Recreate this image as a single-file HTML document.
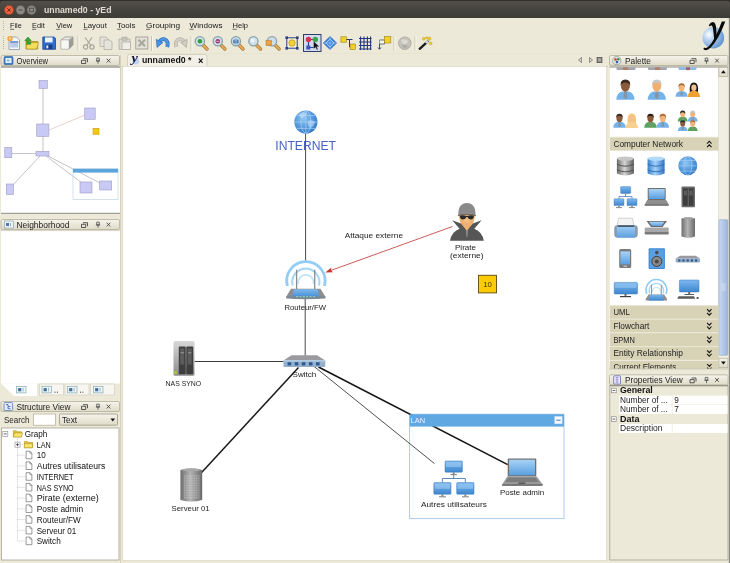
<!DOCTYPE html>
<html><head><meta charset="utf-8"><title>unnamed0 - yEd</title>
<style>
*{margin:0;padding:0}
html,body{width:730px;height:563px;overflow:hidden;background:#ece9d8}
svg{position:absolute;left:-6px;top:-6px;display:block;filter:blur(0.45px)}
text{font-family:"Liberation Sans",sans-serif}
</style></head><body>
<svg width="742" height="575" viewBox="-6 -6 742 575">
<rect x="-6" y="-6" width="742" height="575" fill="#ece9d8"/>

<defs>
<linearGradient id="gTitle" x1="0" y1="0" x2="0" y2="1"><stop offset="0" stop-color="#524f48"/><stop offset="0.5" stop-color="#47453f"/><stop offset="1" stop-color="#3e3c37"/></linearGradient>
<linearGradient id="gHead" x1="0" y1="0" x2="0" y2="1"><stop offset="0" stop-color="#f6f4ec"/><stop offset="1" stop-color="#dfdbc8"/></linearGradient>
<linearGradient id="gBlue" x1="0" y1="0" x2="0" y2="1"><stop offset="0" stop-color="#7db8ee"/><stop offset="1" stop-color="#3d86d0"/></linearGradient>
<linearGradient id="gBlueL" x1="0" y1="0" x2="0" y2="1"><stop offset="0" stop-color="#a8d2f6"/><stop offset="1" stop-color="#5a9fdf"/></linearGradient>
<linearGradient id="gGray" x1="0" y1="0" x2="0" y2="1"><stop offset="0" stop-color="#bdbdbd"/><stop offset="1" stop-color="#7a7a7a"/></linearGradient>
<linearGradient id="gGrayH" x1="0" y1="0" x2="1" y2="0"><stop offset="0" stop-color="#6e6e6e"/><stop offset="0.45" stop-color="#b4b4b4"/><stop offset="1" stop-color="#6a6a6a"/></linearGradient>
<linearGradient id="gNas" x1="0" y1="0" x2="0" y2="1"><stop offset="0" stop-color="#d8d8d8"/><stop offset="1" stop-color="#8c8c8c"/></linearGradient>
<linearGradient id="gThumb" x1="0" y1="0" x2="1" y2="0"><stop offset="0" stop-color="#c9d9f1"/><stop offset="1" stop-color="#9db6de"/></linearGradient>
<radialGradient id="gGlobe" cx="0.4" cy="0.35" r="0.7"><stop offset="0" stop-color="#8cc4f4"/><stop offset="1" stop-color="#2f78c8"/></radialGradient>
<radialGradient id="gLogo" cx="0.3" cy="0.35" r="0.75"><stop offset="0" stop-color="#ffffff"/><stop offset="0.35" stop-color="#b9d3ee"/><stop offset="1" stop-color="#5c93cf"/></radialGradient>
<radialGradient id="gSkin" cx="0.5" cy="0.4" r="0.6"><stop offset="0" stop-color="#f6c48a"/><stop offset="1" stop-color="#e0a060"/></radialGradient>
</defs>
<rect x="-6" y="-6" width="742" height="24" fill="#2e2d2a"/>
<path d="M-6 18 V0 H736 V18 Z" fill="url(#gTitle)"/><path d="M-6 0.400 H736" stroke="#2e2d2a" stroke-width="1"/><path d="M0 0 h4 q-4 0 -4 4 z M730 0 h-4 q4 0 4 4 z" fill="#2a2926"/>
<circle cx="9" cy="10" r="4.7" fill="#e8603c" stroke="#8a3a22" stroke-width="0.6"/>
<path d="M7.3 8.3 L10.7 11.7 M10.7 8.3 L7.3 11.7" stroke="#6e2a18" stroke-width="0.9"/>
<circle cx="20.5" cy="10" r="4.5" fill="#8c8a82" stroke="#5c5a54" stroke-width="0.6"/>
<path d="M18.5 10 H22.5" stroke="#4a4843" stroke-width="0.9"/>
<circle cx="31.5" cy="10" r="4.5" fill="#8c8a82" stroke="#5c5a54" stroke-width="0.6"/>
<rect x="29.6" y="8.2" width="3.8" height="3.6" fill="none" stroke="#4a4843" stroke-width="0.8"/>
<text x="44" y="13.3" font-size="8.8" fill="#dfdbd2" font-weight="bold" text-anchor="start" textLength="67.5" lengthAdjust="spacingAndGlyphs" >unnamed0 - yEd</text>
<rect x="0" y="18" width="730" height="36" fill="#ece9d8"/>
<path d="M3.5 21 V31 M3.5 36 V50" stroke="#b8b4a2" stroke-width="1" stroke-dasharray="1 1"/>
<text x="10" y="28" font-size="8" fill="#1a1a1a" font-weight="normal" text-anchor="start" textLength="11.7" lengthAdjust="spacingAndGlyphs" >File</text>
<path d="M10 29.3 h4.2" stroke="#1a1a1a" stroke-width="0.6"/>
<text x="32" y="28" font-size="8" fill="#1a1a1a" font-weight="normal" text-anchor="start" textLength="12.7" lengthAdjust="spacingAndGlyphs" >Edit</text>
<path d="M32 29.3 h4.2" stroke="#1a1a1a" stroke-width="0.6"/>
<text x="56.2" y="28" font-size="8" fill="#1a1a1a" font-weight="normal" text-anchor="start" textLength="16.1" lengthAdjust="spacingAndGlyphs" >View</text>
<path d="M56.2 29.3 h4.2" stroke="#1a1a1a" stroke-width="0.6"/>
<text x="83.4" y="28" font-size="8" fill="#1a1a1a" font-weight="normal" text-anchor="start" textLength="23.5" lengthAdjust="spacingAndGlyphs" >Layout</text>
<path d="M83.4 29.3 h4.2" stroke="#1a1a1a" stroke-width="0.6"/>
<text x="117" y="28" font-size="8" fill="#1a1a1a" font-weight="normal" text-anchor="start" textLength="18.5" lengthAdjust="spacingAndGlyphs" >Tools</text>
<path d="M117 29.3 h4.2" stroke="#1a1a1a" stroke-width="0.6"/>
<text x="146" y="28" font-size="8" fill="#1a1a1a" font-weight="normal" text-anchor="start" textLength="34" lengthAdjust="spacingAndGlyphs" >Grouping</text>
<path d="M146 29.3 h4.2" stroke="#1a1a1a" stroke-width="0.6"/>
<text x="189.5" y="28" font-size="8" fill="#1a1a1a" font-weight="normal" text-anchor="start" textLength="33" lengthAdjust="spacingAndGlyphs" >Windows</text>
<path d="M189.5 29.3 h4.2" stroke="#1a1a1a" stroke-width="0.6"/>
<text x="232.5" y="28" font-size="8" fill="#1a1a1a" font-weight="normal" text-anchor="start" textLength="15.5" lengthAdjust="spacingAndGlyphs" >Help</text>
<path d="M232.5 29.3 h4.2" stroke="#1a1a1a" stroke-width="0.6"/>
<path d="M0 53.5 H730" stroke="#e6e3d1" stroke-width="0.8"/>
<rect x="728.800" y="18" width="8" height="560" fill="#8d8a80"/>
<g transform="translate(7,36)"><path d="M2 1 h7.5 l3 3 v9.5 h-10.5 z" fill="#f4f6fa" stroke="#8a96ac" stroke-width="0.8"/><rect x="3.2" y="5" width="8" height="6.5" fill="#b9c9e6"/><rect x="3.2" y="5" width="8" height="2" fill="#7d9bd0"/><circle cx="3" cy="2.5" r="2.6" fill="#f2a23a"/><circle cx="3" cy="2.5" r="1.2" fill="#fbd58c"/></g>
<g transform="translate(24.5,36)"><path d="M1.5 4 h4 l1.2 1.5 h6.5 v7.5 h-11.7 z" fill="#d9b92a" stroke="#9c8414" stroke-width="0.7"/><path d="M3 6.5 h11 l-1.8 6.5 h-10.7 z" fill="#f3df5c" stroke="#a8901a" stroke-width="0.6"/><path d="M3.5 1 l-3.2 3.6 h2 v3.6 h4 v-2.2 h-1.8 v-1.4 h2.2 z" fill="#3aa63a" stroke="#1f7a1f" stroke-width="0.5"/></g>
<g transform="translate(42,36)"><path d="M0.8 1 h11.4 l1.3 1.3 v11 h-12.7 z" fill="#2f6fd0" stroke="#1b4792" stroke-width="0.8"/><rect x="3" y="1.4" width="7.6" height="5" fill="#eef2fa"/><rect x="3.4" y="8.6" width="7" height="4.6" fill="#1b3f86"/><rect x="4.3" y="9.4" width="2" height="3" fill="#dfe7f5"/></g>
<g transform="translate(60,36)"><path d="M1 4 l4 -3 h8 v8 l-4 4 h-8 z" fill="#e9e9e6" stroke="#8c8c88" stroke-width="0.7"/><path d="M1 4 h8 v9 M9 4 l4 -3" fill="none" stroke="#8c8c88" stroke-width="0.7"/><path d="M9 4.3 l4 -3 v7.7 l-4 4 z" fill="#9c9c98"/><path d="M1.4 4.4 h7.3 v8.3 h-7.3 z" fill="#f7f7f4"/></g>
<path d="M78 36 V51" stroke="#c9c5b2" stroke-width="1"/><path d="M79 36 V51" stroke="#f8f7f0" stroke-width="1"/>
<g transform="translate(82,36)" fill="none" stroke="#aaa79c" stroke-width="1.2"><path d="M3 1.5 L9 9.5 M10 1.5 L4.5 9.5"/><circle cx="3.6" cy="11" r="2.1"/><circle cx="10" cy="11" r="2.1"/></g>
<g transform="translate(99,36)" fill="#e6e4da" stroke="#b0ada2" stroke-width="0.8"><path d="M1 1 h6 l2 2 v7.5 h-8 z"/><path d="M5 4 h6 l2 2 v7.5 h-8 z"/></g>
<g transform="translate(118,36)" fill="#dcdad0" stroke="#b0ada2" stroke-width="0.8"><path d="M1 3 h11 v10.5 h-11 z"/><path d="M4 1.2 h5 v3 h-5 z" fill="#c9c7bc"/><path d="M4 6 h8.5 v7.5 h-8.5 z" fill="#efede6"/></g>
<g transform="translate(135,36)"><rect x="0.8" y="1" width="12" height="12" fill="#e4e2d8" stroke="#9f9c92" stroke-width="0.9"/><path d="M3.5 3.8 L10 10.3 M10 3.8 L3.5 10.3" stroke="#aaa79c" stroke-width="2.2"/></g>
<path d="M151.5 36 V51" stroke="#c9c5b2" stroke-width="1"/><path d="M152.5 36 V51" stroke="#f8f7f0" stroke-width="1"/>
<g transform="translate(155.5,36)"><path d="M11.800 11 C13.800 3.600 7 0.600 4.200 5.400" fill="none" stroke="#2a66b8" stroke-width="3.800"/><path d="M11.800 11 C13.800 3.600 7 0.600 4.200 5.400" fill="none" stroke="#4a96e4" stroke-width="2.500"/><path d="M0.800 3.400 L7.400 6.600 L1.600 11.400 Z" fill="#4a96e4" stroke="#2a66b8" stroke-width="0.700"/></g>
<g transform="translate(188,36) scale(-1,1)"><path d="M11.800 11 C13.800 3.600 7 0.600 4.200 5.400" fill="none" stroke="#b4b1a6" stroke-width="3.800"/><path d="M11.800 11 C13.800 3.600 7 0.600 4.200 5.400" fill="none" stroke="#d0cec4" stroke-width="2.500"/><path d="M0.800 3.400 L7.400 6.600 L1.600 11.400 Z" fill="#d0cec4" stroke="#a9a69c" stroke-width="0.700"/></g>
<path d="M191 36 V51" stroke="#c9c5b2" stroke-width="1"/><path d="M192 36 V51" stroke="#f8f7f0" stroke-width="1"/>
<g transform="translate(194.4,36)"><path d="M8.400 8.800 L12.600 13" stroke="#a87830" stroke-width="3.400" stroke-linecap="round"/><path d="M8.400 8.800 L12.600 13" stroke="#e0a858" stroke-width="2.200" stroke-linecap="round"/><circle cx="5.500" cy="5.300" r="4.600" fill="#cfe0ea" stroke="#86a2a8" stroke-width="1.300"/><circle cx="5.5" cy="5.3" r="2.300" fill="#2f9e3f"/></g>
<g transform="translate(212.3,36)"><path d="M8.400 8.800 L12.600 13" stroke="#a87830" stroke-width="3.400" stroke-linecap="round"/><path d="M8.400 8.800 L12.600 13" stroke="#e0a858" stroke-width="2.200" stroke-linecap="round"/><circle cx="5.500" cy="5.300" r="4.600" fill="#cfe0ea" stroke="#86a2a8" stroke-width="1.300"/><circle cx="5.5" cy="5.3" r="2.300" fill="#9a3a6a"/><path d="M4 5.3 h3" stroke="#f0d0e0" stroke-width="0.800"/></g>
<g transform="translate(230.4,36)"><path d="M8.400 8.800 L12.600 13" stroke="#a87830" stroke-width="3.400" stroke-linecap="round"/><path d="M8.400 8.800 L12.600 13" stroke="#e0a858" stroke-width="2.200" stroke-linecap="round"/><circle cx="5.500" cy="5.300" r="4.600" fill="#cfe0ea" stroke="#86a2a8" stroke-width="1.300"/><circle cx="5.5" cy="5.5" r="3" fill="#8fb4da"/><path d="M3.6 4.2 v2.8 M7.4 4.2 v2.8 M5.5 4.8 v0.6 M5.5 6.2 v0.6" stroke="#23466e" stroke-width="0.8"/></g>
<g transform="translate(247.9,36)"><path d="M8.400 8.800 L12.600 13" stroke="#a87830" stroke-width="3.400" stroke-linecap="round"/><path d="M8.400 8.800 L12.600 13" stroke="#e0a858" stroke-width="2.200" stroke-linecap="round"/><circle cx="5.500" cy="5.300" r="4.600" fill="#cfe0ea" stroke="#86a2a8" stroke-width="1.300"/><circle cx="4.8" cy="4.6" r="2" fill="#eef6fc"/></g>
<g transform="translate(266.5,36)"><path d="M8.400 8.800 L12.600 13" stroke="#a87830" stroke-width="3.400" stroke-linecap="round"/><path d="M8.400 8.800 L12.600 13" stroke="#e0a858" stroke-width="2.200" stroke-linecap="round"/><circle cx="5.500" cy="5.300" r="4.600" fill="#cfe0ea" stroke="#86a2a8" stroke-width="1.300"/><rect x="-0.5" y="4.6" width="5.4" height="5" fill="#f0a040" stroke="#b8702a" stroke-width="0.5"/></g>
<g transform="translate(285,36)"><rect x="1.8" y="1.8" width="10.4" height="10.4" fill="#f4f1d2" stroke="#2c3e86" stroke-width="1"/><circle cx="7" cy="7" r="3.2" fill="#f3d23a" stroke="#a88a14" stroke-width="0.6"/><g fill="#2c3e86"><rect x="0.4" y="0.4" width="2.6" height="2.6"/><rect x="11" y="0.4" width="2.6" height="2.6"/><rect x="0.4" y="11" width="2.6" height="2.6"/><rect x="11" y="11" width="2.6" height="2.6"/></g></g>
<rect x="303.5" y="34.5" width="17.5" height="17" fill="#d3dcef" stroke="#2f3f6e" stroke-width="1"/>
<g transform="translate(305.5,36.5)"><path d="M3 3 H10 M3 3 V11 H10" fill="none" stroke="#2a3fa0" stroke-width="1.2"/><circle cx="3" cy="3" r="2.7" fill="#e0305a"/><circle cx="9.8" cy="3" r="2.7" fill="#3aa64a"/><rect x="0.8" y="9" width="4" height="4" fill="#3a56c0"/><path d="M8 4.5 v8 l2 -1.8 l1.3 2.8 l1.3 -0.6 l-1.3 -2.7 h2.6 z" fill="#111" stroke="#fff" stroke-width="0.3"/></g>
<g transform="translate(323,36)"><path d="M7 0.6 L13.6 7 L7 13.4 L0.4 7 Z" fill="#3f86dc" stroke="#1f5aa6" stroke-width="0.7"/><path d="M7 3 L11 7 L7 11 L3 7 Z" fill="none" stroke="#a9d0f6" stroke-width="0.9"/><path d="M7 0.6 V13.4 M0.4 7 H13.6" stroke="#a9d0f6" stroke-width="0.6"/></g>
<g transform="translate(340.5,36)"><path d="M5 3.5 H9 V11 H11" fill="none" stroke="#23366e" stroke-width="1"/><path d="M9 3.5 h3" stroke="#23366e" stroke-width="1"/><rect x="0.4" y="0.8" width="5.4" height="5.4" fill="#f0d02a" stroke="#9c8210" stroke-width="0.6"/><rect x="9.6" y="8" width="5.2" height="5.6" fill="#f0d02a" stroke="#9c8210" stroke-width="0.6"/></g>
<g transform="translate(359,36.5)" stroke="#23367e" stroke-width="1.1"><path d="M0 2 H12.5 M0 5.5 H12.5 M0 9 H12.5 M0 12.5 H12.5 M1.6 0 V13.5 M5 0 V13.5 M8.4 0 V13.5 M11.6 0 V13.5"/></g>
<g transform="translate(377,36)"><path d="M2.5 4 V13 M1 11.5 l1.5 1.8 l1.5 -1.8" fill="none" stroke="#2a3a6e" stroke-width="0.9"/><path d="M2.5 4 h5 v4 h-5" fill="#f4f4f0" stroke="#2a3a6e" stroke-width="0.7"/><rect x="7.4" y="0.6" width="6.4" height="6.4" fill="#f0d02a" stroke="#9c8210" stroke-width="0.6"/></g>
<path d="M394 36 V51" stroke="#c9c5b2" stroke-width="1"/><path d="M395 36 V51" stroke="#f8f7f0" stroke-width="1"/>
<g transform="translate(398,36)"><circle cx="6.8" cy="7.2" r="6.3" fill="#c4c2b8" stroke="#a3a096" stroke-width="0.7"/><path d="M3 4 q4 -2 7 1 q-1 4 -5 3 z" fill="#dcdad2"/><path d="M4 9 q3 -1 6 1 q-2 3 -5 2 z" fill="#b0aea4"/></g>
<path d="M415 36 V51" stroke="#c9c5b2" stroke-width="1"/><path d="M416 36 V51" stroke="#f8f7f0" stroke-width="1"/>
<g transform="translate(418.5,36)"><path d="M1.2 12.8 L9 5.6" stroke="#1c1c1c" stroke-width="2.3" stroke-linecap="round"/><path d="M7.4 7 L9.3 5.3" stroke="#e8e8e8" stroke-width="2.3"/><g fill="#f0d02a" stroke="#a88a14" stroke-width="0.4"><circle cx="10.8" cy="2.6" r="1.7"/><circle cx="5.2" cy="2.8" r="1.4"/><circle cx="12.2" cy="7.4" r="1.4"/><circle cx="8" cy="1.8" r="1"/></g></g>
<circle cx="713.3" cy="37.7" r="10.8" fill="url(#gLogo)"/>
<path d="M704.4 47.4 q1.8 1.4 4.2 -0.8 q6.4 -6.500 13.200 -25.200 h3.500 q-6.700 18 -14.600 26.200 q-3.800 3.600 -6.500 2.200 q-1.700 -1 0.200 -2.400 z" fill="#0a0a0a"/>
<path d="M708.800 25.200 q2.600 -4.200 5.400 -2.800 q1.800 1.400 2 6.800 l0.700 9 l-2.500 2.800 l-1.300 -11.800 q-0.400 -3.800 -1.800 -3.800 q-0.900 0 -1.700 1 z" fill="#0a0a0a"/>
<rect x="1" y="55.5" width="118.5" height="10" rx="1.5" fill="url(#gHead)" stroke="#b3af9c" stroke-width="0.8"/>
<text x="16.5" y="63.5" font-size="8.2" fill="#222" font-weight="normal" text-anchor="start" textLength="31.6" lengthAdjust="spacingAndGlyphs" >Overview</text>
<path d="M83.0 58.7 h4.5 v3.5 M81.5 60.3 h4.2 v3.2 h-4.2 z" fill="none" stroke="#333" stroke-width="0.8"/>
<path d="M96.7 58.1 h2.600 v2.800 h-2.600 z M95.9 61.0 h4.200 M98.0 61.0 v2.800" fill="none" stroke="#3c3c3c" stroke-width="0.700"/>
<path d="M106.7 58.7 l3.6 3.8 M110.3 58.7 l-3.6 3.8" stroke="#333" stroke-width="0.8"/>
<g transform="translate(4,56.5)"><rect x="0" y="0" width="9" height="8" rx="1" fill="#3f7fd0" stroke="#2a5a9c" stroke-width="0.6"/><rect x="1.5" y="1.5" width="6" height="5" fill="#e8f0fa"/><rect x="3" y="3" width="2.5" height="2" fill="#8fb0dc"/></g>
<rect x="1" y="66.5" width="119" height="147" fill="#fff"/>
<path d="M1 67 H120" stroke="#6e6c64" stroke-width="1.2"/><path d="M1 213.3 H120" stroke="#8e8c84" stroke-width="1"/>
<path d="M120.5 55 V563" stroke="#d4d0bc" stroke-width="1"/>
<g stroke="#b4b4bc" stroke-width="0.8" fill="none"><path d="M43 88 V124"/><path d="M49 130 L85 115" stroke="#e4c4c4"/><path d="M43 136 V151.5"/><path d="M12 153.5 H36"/><path d="M40 156 L12 186"/><path d="M46 156 L82 183"/><path d="M47 155.5 L100 183"/></g>
<rect x="39" y="80.4" width="8.3" height="8" fill="#c9c9f6" stroke="#9c9cc4" stroke-width="0.6"/>
<rect x="84.7" y="108" width="10.5" height="11.3" fill="#c9c9f6" stroke="#9c9cc4" stroke-width="0.6"/>
<rect x="36.7" y="124" width="12.2" height="12.3" fill="#c9c9f6" stroke="#9c9cc4" stroke-width="0.6"/>
<rect x="93" y="128.3" width="6" height="6" fill="#f3c61a" stroke="#c9a010" stroke-width="0.6"/>
<rect x="4.8" y="147.4" width="7" height="10.3" fill="#c9c9f6" stroke="#9c9cc4" stroke-width="0.6"/>
<rect x="36" y="151.3" width="13" height="4.7" fill="#c9c9f6" stroke="#9c9cc4" stroke-width="0.6"/>
<rect x="6.4" y="184" width="7" height="10.4" fill="#c9c9f6" stroke="#9c9cc4" stroke-width="0.6"/>
<rect x="73" y="168.8" width="45" height="30.7" fill="none" stroke="#c4d4e0" stroke-width="0.7"/>
<rect x="73" y="168.8" width="45" height="3.8" fill="#5ba4dc"/>
<rect x="80" y="182" width="12" height="11" fill="#c9c9f6" stroke="#9c9cc4" stroke-width="0.6"/>
<rect x="99.7" y="181" width="12" height="9" fill="#c9c9f6" stroke="#9c9cc4" stroke-width="0.6"/>
<rect x="1" y="219.5" width="118.5" height="10" rx="1.5" fill="url(#gHead)" stroke="#b3af9c" stroke-width="0.8"/>
<text x="16.5" y="227.5" font-size="8.2" fill="#222" font-weight="normal" text-anchor="start" textLength="53" lengthAdjust="spacingAndGlyphs" >Neighborhood</text>
<path d="M83.0 222.7 h4.5 v3.5 M81.5 224.3 h4.2 v3.2 h-4.2 z" fill="none" stroke="#333" stroke-width="0.8"/>
<path d="M96.7 222.1 h2.600 v2.800 h-2.600 z M95.9 225.0 h4.200 M98.0 225.0 v2.800" fill="none" stroke="#3c3c3c" stroke-width="0.700"/>
<path d="M106.7 222.7 l3.6 3.8 M110.3 222.7 l-3.6 3.8" stroke="#333" stroke-width="0.8"/>
<g transform="translate(4.5,221)"><rect x="0" y="0" width="9" height="7" fill="#eef4f8" stroke="#7a9ab0" stroke-width="0.6"/><rect x="1.5" y="2" width="3" height="3" fill="#4a7ab0"/><path d="M6 2 v3" stroke="#7a9ab0" stroke-width="0.8"/></g>
<rect x="1" y="230.5" width="119" height="153" fill="#fff"/>
<path d="M1 230.600 H120" stroke="#d0ccba" stroke-width="0.8"/>
<path d="M1 383.5 L14 396 H37 V383.5 Z" fill="#fff"/>
<rect x="39.5" y="384" width="24" height="11" fill="#f7f6f0" stroke="#d4d0c0" stroke-width="0.7"/>
<rect x="65" y="384" width="24" height="11" fill="#f7f6f0" stroke="#d4d0c0" stroke-width="0.7"/>
<rect x="90.5" y="384" width="24" height="11" fill="#f7f6f0" stroke="#d4d0c0" stroke-width="0.7"/>
<g transform="translate(16.5,386.3)"><rect x="0" y="0" width="9.5" height="6.6" fill="#eef6f6" stroke="#86aab4" stroke-width="0.7"/><rect x="1.6" y="1.8" width="3.2" height="3.2" fill="#3f6fa0"/><path d="M6.6 1.6 v3.6" stroke="#86aab4" stroke-width="0.8"/></g>
<g transform="translate(42,386.3)"><rect x="0" y="0" width="9.5" height="6.6" fill="#eef6f6" stroke="#86aab4" stroke-width="0.7"/><rect x="1.6" y="1.8" width="3.2" height="3.2" fill="#3f6fa0"/><path d="M6.6 1.6 v3.6" stroke="#86aab4" stroke-width="0.8"/></g>
<path d="M54.5 392.2 h1 m1.4 0 h1" stroke="#333" stroke-width="1"/>
<g transform="translate(67.5,386.3)"><rect x="0" y="0" width="9.5" height="6.6" fill="#eef6f6" stroke="#86aab4" stroke-width="0.7"/><rect x="1.6" y="1.8" width="3.2" height="3.2" fill="#3f6fa0"/><path d="M6.6 1.6 v3.6" stroke="#86aab4" stroke-width="0.8"/></g>
<path d="M80.0 392.2 h1 m1.4 0 h1" stroke="#333" stroke-width="1"/>
<g transform="translate(93.5,386.3)"><rect x="0" y="0" width="9.5" height="6.6" fill="#eef6f6" stroke="#86aab4" stroke-width="0.7"/><rect x="1.6" y="1.8" width="3.2" height="3.2" fill="#3f6fa0"/><path d="M6.6 1.6 v3.6" stroke="#86aab4" stroke-width="0.8"/></g>
<rect x="1" y="401.5" width="118.5" height="10" rx="1.5" fill="url(#gHead)" stroke="#b3af9c" stroke-width="0.8"/>
<text x="16.5" y="409.5" font-size="8.2" fill="#222" font-weight="normal" text-anchor="start" textLength="53.9" lengthAdjust="spacingAndGlyphs" >Structure View</text>
<path d="M83.0 404.7 h4.5 v3.5 M81.5 406.3 h4.2 v3.2 h-4.2 z" fill="none" stroke="#333" stroke-width="0.8"/>
<path d="M96.7 404.1 h2.600 v2.800 h-2.600 z M95.9 407.0 h4.200 M98.0 407.0 v2.800" fill="none" stroke="#3c3c3c" stroke-width="0.700"/>
<path d="M106.7 404.7 l3.6 3.8 M110.3 404.7 l-3.6 3.8" stroke="#333" stroke-width="0.8"/>
<g transform="translate(4,402.5)"><rect x="0" y="0" width="8.6" height="8" rx="1" fill="#e4ecf8" stroke="#4a6eb0" stroke-width="0.7"/><path d="M2 2 h2 v2 M4 4 h2.5 M4 4 v2.2 h2.5" fill="none" stroke="#3a5ea8" stroke-width="0.8"/></g>
<text x="4" y="422.7" font-size="8.2" fill="#222" font-weight="normal" text-anchor="start" textLength="25.4" lengthAdjust="spacingAndGlyphs" >Search</text>
<rect x="33.5" y="414" width="22" height="11.2" fill="#fff" stroke="#b8b4a2" stroke-width="0.8"/>
<rect x="59.5" y="414" width="58" height="11.2" rx="1" fill="url(#gHead)" stroke="#9c9888" stroke-width="0.8"/>
<text x="62" y="422.6" font-size="8.2" fill="#222" font-weight="normal" text-anchor="start" textLength="15" lengthAdjust="spacingAndGlyphs" >Text</text>
<path d="M110.5 418.6 h4.6 l-2.3 2.8 z" fill="#111"/>
<rect x="1.5" y="428" width="117.5" height="132" fill="#fff" stroke="#a8a494" stroke-width="0.8"/>
<g stroke="#a8a8a8" stroke-width="0.6" stroke-dasharray="1 1" fill="none">
<path d="M17.5 438.700 V541.1"/>
<path d="M17.5 444.44 H25"/>
<path d="M17.5 455.18 H25"/>
<path d="M17.5 465.91999999999996 H25"/>
<path d="M17.5 476.65999999999997 H25"/>
<path d="M17.5 487.4 H25"/>
<path d="M17.5 498.14 H25"/>
<path d="M17.5 508.88 H25"/>
<path d="M17.5 519.62 H25"/>
<path d="M17.5 530.36 H25"/>
<path d="M17.5 541.1 H25"/>
</g>
<rect x="2.8" y="431.4" width="5" height="5" fill="#fff" stroke="#888" stroke-width="0.6"/><path d="M3.9 433.9 h2.8" stroke="#222" stroke-width="0.7"/>
<g transform="translate(13,429.5)"><path d="M0.3 1.2 h3 l0.9 1 h4.3 v5.3 h-8.2 z" fill="#e4c23a" stroke="#a88a14" stroke-width="0.5"/><path d="M1.6 3.4 h8 l-1.2 4.1 h-8.1 z" fill="#f8e474" stroke="#a88a14" stroke-width="0.5"/></g>
<text x="24.7" y="436.9" font-size="8.3" fill="#111" font-weight="normal" text-anchor="start" textLength="22.6" lengthAdjust="spacingAndGlyphs" >Graph</text>
<rect x="15" y="442.14" width="5" height="5" fill="#fff" stroke="#888" stroke-width="0.6"/><path d="M16.1 444.64 h2.8 M17.5 443.24 v2.8" stroke="#222" stroke-width="0.7"/>
<g transform="translate(24.2,440.24)"><path d="M0.3 1.2 h3 l0.9 1 h4.3 v5.3 h-8.2 z" fill="#e4c23a" stroke="#a88a14" stroke-width="0.5"/><path d="M0.3 3.4 h8 l-0.2 4.1 h-8.1 z" fill="#f8e474" stroke="#a88a14" stroke-width="0.5"/></g>
<text x="36.7" y="447.64" font-size="8.3" fill="#111" font-weight="normal" text-anchor="start" textLength="14.1" lengthAdjust="spacingAndGlyphs" >LAN</text>
<g transform="translate(25.7,450.78)"><path d="M0.4 0.4 h3.8 l2 2 v5.6 h-5.8 z" fill="#fff" stroke="#555" stroke-width="0.6"/><path d="M4.2 0.4 v2 h2" fill="none" stroke="#555" stroke-width="0.5"/></g>
<text x="36.7" y="458.38" font-size="8.3" fill="#111" font-weight="normal" text-anchor="start" textLength="9" lengthAdjust="spacingAndGlyphs" >10</text>
<g transform="translate(25.7,461.52)"><path d="M0.4 0.4 h3.8 l2 2 v5.6 h-5.8 z" fill="#fff" stroke="#555" stroke-width="0.6"/><path d="M4.2 0.4 v2 h2" fill="none" stroke="#555" stroke-width="0.5"/></g>
<text x="36.7" y="469.12" font-size="8.3" fill="#111" font-weight="normal" text-anchor="start" textLength="68.6" lengthAdjust="spacingAndGlyphs" >Autres utilisateurs</text>
<g transform="translate(25.7,472.25999999999993)"><path d="M0.4 0.4 h3.8 l2 2 v5.6 h-5.8 z" fill="#fff" stroke="#555" stroke-width="0.6"/><path d="M4.2 0.4 v2 h2" fill="none" stroke="#555" stroke-width="0.5"/></g>
<text x="36.7" y="479.85999999999996" font-size="8.3" fill="#111" font-weight="normal" text-anchor="start" textLength="36.7" lengthAdjust="spacingAndGlyphs" >INTERNET</text>
<g transform="translate(25.7,482.99999999999994)"><path d="M0.4 0.4 h3.8 l2 2 v5.6 h-5.8 z" fill="#fff" stroke="#555" stroke-width="0.6"/><path d="M4.2 0.4 v2 h2" fill="none" stroke="#555" stroke-width="0.5"/></g>
<text x="36.7" y="490.59999999999997" font-size="8.3" fill="#111" font-weight="normal" text-anchor="start" textLength="37" lengthAdjust="spacingAndGlyphs" >NAS SYNO</text>
<g transform="translate(25.7,493.73999999999995)"><path d="M0.4 0.4 h3.8 l2 2 v5.6 h-5.8 z" fill="#fff" stroke="#555" stroke-width="0.6"/><path d="M4.2 0.4 v2 h2" fill="none" stroke="#555" stroke-width="0.5"/></g>
<text x="36.7" y="501.34" font-size="8.3" fill="#111" font-weight="normal" text-anchor="start" textLength="62" lengthAdjust="spacingAndGlyphs" >Pirate  (externe)</text>
<g transform="translate(25.7,504.4799999999999)"><path d="M0.4 0.4 h3.8 l2 2 v5.6 h-5.8 z" fill="#fff" stroke="#555" stroke-width="0.6"/><path d="M4.2 0.4 v2 h2" fill="none" stroke="#555" stroke-width="0.5"/></g>
<text x="36.7" y="512.0799999999999" font-size="8.3" fill="#111" font-weight="normal" text-anchor="start" textLength="46.6" lengthAdjust="spacingAndGlyphs" >Poste admin</text>
<g transform="translate(25.7,515.2199999999999)"><path d="M0.4 0.4 h3.8 l2 2 v5.6 h-5.8 z" fill="#fff" stroke="#555" stroke-width="0.6"/><path d="M4.2 0.4 v2 h2" fill="none" stroke="#555" stroke-width="0.5"/></g>
<text x="36.7" y="522.8199999999999" font-size="8.3" fill="#111" font-weight="normal" text-anchor="start" textLength="44" lengthAdjust="spacingAndGlyphs" >Routeur/FW</text>
<g transform="translate(25.7,525.9599999999999)"><path d="M0.4 0.4 h3.8 l2 2 v5.6 h-5.8 z" fill="#fff" stroke="#555" stroke-width="0.6"/><path d="M4.2 0.4 v2 h2" fill="none" stroke="#555" stroke-width="0.5"/></g>
<text x="36.7" y="533.56" font-size="8.3" fill="#111" font-weight="normal" text-anchor="start" textLength="39.5" lengthAdjust="spacingAndGlyphs" >Serveur 01</text>
<g transform="translate(25.7,536.6999999999999)"><path d="M0.4 0.4 h3.8 l2 2 v5.6 h-5.8 z" fill="#fff" stroke="#555" stroke-width="0.6"/><path d="M4.2 0.4 v2 h2" fill="none" stroke="#555" stroke-width="0.5"/></g>
<text x="36.7" y="544.3" font-size="8.3" fill="#111" font-weight="normal" text-anchor="start" textLength="24" lengthAdjust="spacingAndGlyphs" >Switch</text>
<path d="M127.5 66.5 V56.5 Q127.5 54.5 129.5 54.5 H205 Q207 54.5 207 56.5 V66.5" fill="#f2f0e6" stroke="#cfcbb8" stroke-width="0.8"/>
<path d="M121 66.5 H608" stroke="#d0ccb8" stroke-width="1"/>
<circle cx="135.800" cy="61.200" r="3.200" fill="#bdd3ee"/>
<text x="131.600" y="62" font-size="12.500" textLength="6.400" lengthAdjust="spacingAndGlyphs" font-style="italic" font-weight="bold" fill="#10103a" style="font-family:&quot;Liberation Serif&quot;,serif">y</text>
<text x="141.9" y="63.2" font-size="8.8" fill="#111" font-weight="bold" text-anchor="start" textLength="49.6" lengthAdjust="spacingAndGlyphs" >unnamed0 *</text>
<path d="M198.8 58.6 l3.8 4.2 M202.6 58.6 l-3.8 4.2" stroke="#111" stroke-width="1.1"/>
<path d="M581.5 57.5 v5 l-3 -2.5 z M589.5 57.5 v5 l3 -2.5 z" fill="#ddd9c8" stroke="#555" stroke-width="0.6"/>
<rect x="597" y="57.3" width="5" height="5.4" fill="#8a887e" stroke="#444" stroke-width="0.6"/><path d="M598.2 59 h2.6 M598.2 60.4 h2.6" stroke="#eee" stroke-width="0.5"/>
<rect x="123" y="66.6" width="483.200" height="493.600" fill="#fff"/>
<path d="M122.600 66.600 V560.500 H606.600 V66.600" fill="none" stroke="#dedac8" stroke-width="0.8"/>
<rect x="409.6" y="414.200" width="154.400" height="104.400" fill="#fff" stroke="#a4c8ea" stroke-width="0.9"/>
<g fill="none" stroke-linecap="butt">
<path d="M305.6 132 V262" stroke="#4a4a4a" stroke-width="1"/>
<path d="M305.2 298 V356" stroke="#4a4a4a" stroke-width="1"/>
<path d="M194.5 361.5 H284" stroke="#3c3c3c" stroke-width="1"/>
<path d="M298.5 367.5 L201.4 472.7" stroke="#1a1a1a" stroke-width="1.5"/>
<path d="M318.5 367 L507.7 464.6" stroke="#141414" stroke-width="1.550"/>
<path d="M314 366.4 L434.5 463.6" stroke="#3c3c3c" stroke-width="0.9"/>
<path d="M452.5 226.5 L331 270.4" stroke="#c84848" stroke-width="0.9"/>
</g>
<path d="M325.3 272.4 L331.4 267.6 L330.9 270.3 L332.9 272.3 Z" fill="#c83030"/>
<rect x="409.6" y="414.200" width="154.400" height="12.400" fill="#5fa8e2"/>
<text x="410.6" y="423" font-size="7.6" fill="#eef6fd" font-weight="normal" text-anchor="start" textLength="14.5" lengthAdjust="spacingAndGlyphs" >LAN</text>
<rect x="554.8" y="416.5" width="7.300" height="7.300" fill="#f4f8fc" stroke="#d4e4f4" stroke-width="0.5"/><path d="M556.3 420.2 h4.3" stroke="#4a7ab0" stroke-width="1"/>
<circle cx="305.9" cy="122" r="11.6" fill="url(#gGlobe)"/>
<g fill="none" stroke="#a9d4f8" stroke-width="0.8" opacity="0.85"><ellipse cx="305.9" cy="122" rx="5" ry="11.2"/><path d="M294.6 122 H317.2 M296.4 115.6 H315.4 M296.4 128.4 H315.4"/><path d="M305.9 110.6 V133.4"/></g>
<path d="M299 114 q4 -3 8 -1 q-1 4 -5 5 q-3 -1 -3 -4 z M308 121 q4 -2 7 1 q-1 5 -5 6 q-3 -3 -2 -7 z" fill="#cfe6fb" opacity="0.55"/>
<text x="275.3" y="149.5" font-size="12" fill="#4660c4" font-weight="normal" text-anchor="start" textLength="60.7" lengthAdjust="spacingAndGlyphs" >INTERNET</text>
<g fill="none" stroke-linecap="butt">
<path d="M287.4 286 A19.2 19.2 0 1 1 324.4 286" stroke="#93cdf5" stroke-width="2.8"/>
<path d="M292.6 285.5 A13.6 13.6 0 1 1 319 285.5" stroke="#a9d8f7" stroke-width="2.2"/>
<path d="M298.2 284 A7.8 7.8 0 1 1 313.6 284" stroke="#c2e3fa" stroke-width="1.8"/>
</g>
<path d="M296.6 269.8 V290 M314.7 269.8 V290" stroke="#8c8c8c" stroke-width="1.3"/>
<path d="M286.3 296.5 L291 288.8 H320.5 L325.3 296.5 V298.5 H286.3 Z" fill="#8e8e8e"/>
<path d="M294 289.2 H317.5 L320 298.5 H291.5 Z" fill="url(#gBlue)"/>
<path d="M286.3 296.2 H325.3 V298 Q306 300.6 286.3 298 Z" fill="#7c8a98"/>
<path d="M296 296.6 h19" stroke="#7fe0b0" stroke-width="0.9" stroke-dasharray="2 1.4"/>
<text x="284.4" y="309.6" font-size="8" fill="#1c1c1c" font-weight="normal" text-anchor="start" textLength="41.6" lengthAdjust="spacingAndGlyphs" >Routeur/FW</text>
<text x="344.7" y="238" font-size="8" fill="#1c1c1c" font-weight="normal" text-anchor="start" textLength="58.3" lengthAdjust="spacingAndGlyphs" >Attaque externe</text>
<path d="M450 240.8 q1.5 -9 9.5 -12 l-7.3 -8.5 l9.6 3.4 l5.1 6 l5.1 -6 l9.6 -3.4 l-7.3 8.500 q8 3 9.5 12 z" fill="#565656"/>
<path d="M459 213.5 q0 8 3 11.5 q2.5 3.400 4.900 3.800 q2.400 -0.400 4.900 -3.800 q3 -3.500 3 -11.500 z" fill="url(#gSkin)"/>
<path d="M461.600 222.5 l5.300 9 l5.300 -9 l-2 -0.5 l-3.300 4 l-3.300 -4 z" fill="#f0b070"/>
<path d="M465.800 231 l1.100 -1.500 l1.100 1.500 l-0.600 6 h-1 z" fill="#8a8a8a"/>
<path d="M458.300 214.600 q0 -11.600 8.600 -11.600 q8.600 0 8.600 11.600 q-8.600 -2.200 -17.200 0 z" fill="#8a8a8a"/>
<path d="M458 214.800 q8.900 -2.600 17.800 0 l0.200 1.400 q-9 -2.400 -18.200 0 z" fill="#6a6a6a"/>
<path d="M459.800 215.800 q3.400 -1 6.300 0.200 q0.800 -0.300 1.600 0 q2.900 -1.200 6.300 -0.200 q-0.200 3.600 -3.200 3.700 q-2.600 0 -3.400 -2.400 h-1 q-0.800 2.400 -3.400 2.400 q-3 -0.100 -3.200 -3.700 z" fill="#2a2a2a"/>
<text x="455" y="250" font-size="8" fill="#1c1c1c" font-weight="normal" text-anchor="start" textLength="21" lengthAdjust="spacingAndGlyphs" >Pirate</text>
<text x="450" y="258.4" font-size="8" fill="#1c1c1c" font-weight="normal" text-anchor="start" textLength="33.5" lengthAdjust="spacingAndGlyphs" >(externe)</text>
<rect x="478.5" y="275.3" width="18" height="17.6" fill="#fccb06" stroke="#5a4a10" stroke-width="0.9"/>
<text x="487.5" y="287" font-size="7.6" fill="#3a3000" font-weight="normal" text-anchor="middle" textLength="8.6" lengthAdjust="spacingAndGlyphs" >10</text>
<rect x="173.5" y="341" width="21" height="34.8" rx="1.5" fill="url(#gNas)"/>
<rect x="178.8" y="346.6" width="6.9" height="27.6" rx="0.8" fill="#3e3e3e"/><rect x="186.300" y="346.600" width="6.900" height="27.600" rx="0.8" fill="#3e3e3e"/>
<rect x="180.2" y="348.5" width="4" height="16" fill="#5c5c5c"/><rect x="187.7" y="348.5" width="4" height="16" fill="#5c5c5c"/>
<rect x="180.6" y="352" width="3.2" height="1.4" fill="#8a8a8a"/><rect x="188.1" y="352" width="3.2" height="1.4" fill="#8a8a8a"/>
<rect x="174.2" y="371.2" width="2.6" height="2.8" fill="#a4d020"/>
<text x="165.6" y="385.6" font-size="7.8" fill="#1c1c1c" font-weight="normal" text-anchor="start" textLength="35.6" lengthAdjust="spacingAndGlyphs" >NAS SYNO</text>
<path d="M283.4 360.5 L291.5 355.2 H317 L325.3 360.5 Z" fill="#9a9aa0"/>
<rect x="283.4" y="360.2" width="41.9" height="6.8" rx="1" fill="#94b0cc"/>
<rect x="283.4" y="360.2" width="41.9" height="1.4" fill="#b9d0e6"/>
<rect x="287.6" y="362.2" width="3.6" height="3.2" fill="#2c5a8e"/>
<rect x="294.70000000000005" y="362.2" width="3.6" height="3.2" fill="#2c5a8e"/>
<rect x="301.8" y="362.2" width="3.6" height="3.2" fill="#2c5a8e"/>
<rect x="308.90000000000003" y="362.2" width="3.6" height="3.2" fill="#2c5a8e"/>
<rect x="316.0" y="362.2" width="3.6" height="3.2" fill="#2c5a8e"/>
<text x="292.5" y="377" font-size="8" fill="#1c1c1c" font-weight="normal" text-anchor="start" textLength="23.8" lengthAdjust="spacingAndGlyphs" >Switch</text>
<path d="M180.4 470 q11 -3.400 21.800 0 V500 q-10.900 3.200 -21.800 0 Z" fill="url(#gGrayH)"/>
<path d="M180.4 470 q11 -3.400 21.800 0 q-10.900 2.600 -21.800 0 Z" fill="#a8a8a8"/>
<g stroke="#d0d0d0" stroke-width="0.5" opacity="0.55"><path d="M184 476.0 H199"/><path d="M184 478.4 H199"/><path d="M184 480.8 H199"/><path d="M184 483.2 H199"/><path d="M184 485.6 H199"/><path d="M184 488.0 H199"/><path d="M184 490.4 H199"/><path d="M184 492.8 H199"/><path d="M184 495.2 H199"/><path d="M184 497.6 H199"/><path d="M184.6 475 V499"/><path d="M187.0 475 V499"/><path d="M189.4 475 V499"/><path d="M191.79999999999998 475 V499"/><path d="M194.2 475 V499"/><path d="M196.6 475 V499"/><path d="M199.0 475 V499"/></g>
<text x="171.6" y="511.4" font-size="8" fill="#1c1c1c" font-weight="normal" text-anchor="start" textLength="38" lengthAdjust="spacingAndGlyphs" >Serveur 01</text>
<path d="M453.7 474 V478.500 M442.400 482.600 V478.500 H465.300 V482.600" fill="none" stroke="#4a7ab4" stroke-width="0.9"/>
<rect x="445" y="461" width="17.4" height="11.2" rx="0.8" fill="url(#gBlue)" stroke="#3a78bc" stroke-width="0.5"/>
<rect x="446" y="462" width="15.399999999999999" height="5.04" fill="#9ccbf4" opacity="0.6"/>
<path d="M450.500 474.600 h6.400" stroke="#7a7a7a" stroke-width="1"/><path d="M452.700 472.200 h2 v2 h-2 z" fill="#8a8a8a"/>
<rect x="433.8" y="482.6" width="17.2" height="11.6" rx="0.8" fill="url(#gBlue)" stroke="#3a78bc" stroke-width="0.5"/>
<rect x="434.8" y="483.6" width="15.2" height="5.22" fill="#9ccbf4" opacity="0.6"/>
<path d="M441.40000000000003 494.20000000000005 v2 h2 v-2 z" fill="#8a8a8a"/><path d="M439.00000000000006 496.80000000000007 h6.800" stroke="#7a7a7a" stroke-width="1"/>
<rect x="456.7" y="482.6" width="17.3" height="11.6" rx="0.8" fill="url(#gBlue)" stroke="#3a78bc" stroke-width="0.5"/>
<rect x="457.7" y="483.6" width="15.3" height="5.22" fill="#9ccbf4" opacity="0.6"/>
<path d="M464.34999999999997 494.20000000000005 v2 h2 v-2 z" fill="#8a8a8a"/><path d="M461.95 496.80000000000007 h6.800" stroke="#7a7a7a" stroke-width="1"/>
<text x="421" y="506.5" font-size="8" fill="#1c1c1c" font-weight="normal" text-anchor="start" textLength="65.8" lengthAdjust="spacingAndGlyphs" >Autres utilisateurs</text>
<rect x="507.700" y="458.400" width="28.600" height="18" rx="1" fill="#6e6e6e"/>
<rect x="509" y="459.700" width="26" height="15.600" fill="url(#gBlueL)"/>
<path d="M507.200 476.400 H536.800 L542.500 484.200 V485.800 H502.300 V484.200 Z" fill="#9a9a9a"/>
<path d="M502.300 484.200 H542.500 V485.800 H502.300 Z" fill="#6a6a6a"/>
<path d="M508.500 477.600 H535.500 L538.500 482 H505.500 Z" fill="#7c7c7c"/>
<rect x="518.500" y="482.400" width="7" height="1.600" fill="#5a5a5a"/>
<text x="499.9" y="495.4" font-size="8" fill="#1c1c1c" font-weight="normal" text-anchor="start" textLength="44.3" lengthAdjust="spacingAndGlyphs" >Poste admin</text>
<rect x="609.5" y="55.5" width="118.5" height="10" rx="1.5" fill="url(#gHead)" stroke="#b3af9c" stroke-width="0.8"/>
<text x="625.0" y="63.5" font-size="8.2" fill="#222" font-weight="normal" text-anchor="start" textLength="26" lengthAdjust="spacingAndGlyphs" >Palette</text>
<path d="M691.5 58.7 h4.5 v3.5 M690.0 60.3 h4.2 v3.2 h-4.2 z" fill="none" stroke="#333" stroke-width="0.8"/>
<path d="M705.2 58.1 h2.600 v2.800 h-2.600 z M704.4 61.0 h4.200 M706.5 61.0 v2.800" fill="none" stroke="#3c3c3c" stroke-width="0.700"/>
<path d="M715.2 58.7 l3.6 3.8 M718.8 58.7 l-3.6 3.8" stroke="#333" stroke-width="0.8"/>
<g transform="translate(612.5,56.300)"><circle cx="4.300" cy="4.300" r="4.100" fill="#dfe8e0" stroke="#7a8a80" stroke-width="0.6"/><circle cx="3" cy="3.200" r="1.300" fill="#d04030"/><circle cx="5.800" cy="3" r="1.200" fill="#3a8a3a"/><circle cx="4.500" cy="5.800" r="1.300" fill="#3a5ab0"/></g>
<rect x="609.5" y="66.5" width="119" height="302" fill="#f4f2e8"/>
<rect x="610" y="67" width="108.5" height="301.500" fill="#fff"/>
<path d="M609.5 67 H728.5" stroke="#8e8c84" stroke-width="1"/>
<path d="M609.5 368.800 H728.5" stroke="#b8b4a2" stroke-width="1"/>
<rect x="718.700" y="67.500" width="9.500" height="301" fill="#f1efe3" stroke="#d4d0bc" stroke-width="0.5"/>
<rect x="718.900" y="67.500" width="9" height="9" fill="url(#gHead)" stroke="#a8a494" stroke-width="0.6"/><path d="M721 73.300 h4.800 l-2.400 -3 z" fill="#111"/>
<rect x="718.900" y="219.800" width="9" height="135.400" rx="1" fill="url(#gThumb)" stroke="#8ea6d0" stroke-width="0.6"/>
<path d="M721 284 h4.800 M721 286 h4.800 M721 288 h4.800 M721 290 h4.800" stroke="#e8f0fa" stroke-width="0.6"/>
<rect x="718.900" y="358.200" width="9" height="9.500" fill="url(#gHead)" stroke="#a8a494" stroke-width="0.6"/><path d="M721 361.600 h4.800 l-2.400 3 z" fill="#111"/>
<path d="M616.500 67.300 h19 v1.400 q0 1.400 -1.400 1.400 h-16.200 q-1.400 0 -1.400 -1.400 z" fill="#a4a4ac"/><path d="M648 67.300 h19 v1.400 q0 1.400 -1.400 1.400 h-16.200 q-1.400 0 -1.400 -1.400 z" fill="#a4a4ac"/><path d="M678.500 67.300 h18 v1.400 q0 1.400 -1.400 1.400 h-15.200 q-1.400 0 -1.400 -1.400 z" fill="#8eb8e2"/>
<path d="M623 67.300 h5 v2.800 h-5 z M655 67.300 h5 v2.800 h-5 z" fill="#b08070"/><path d="M686 67.300 h4 v2.800 h-4 z" fill="#a06070"/>
<g transform="translate(625.4,79.6) scale(0.96)"><path d="M-9.500 21 q0.500 -7 6 -8.500 h7 q5.500 1.500 6 8.500 z" fill="#74b2ea"/><path d="M-1.300 12.500 h2.600 l0.800 6 l-2.100 2 l-2.100 -2 z" fill="#8a8a8a" opacity="0.7"/><ellipse cx="0" cy="7" rx="4.600" ry="5.600" fill="#8a5a3a"/><path d="M-5 6.500 q-0.500 -6.500 5 -6.500 q5.500 0 5 6.500 q-1.500 -3.500 -5 -3.500 q-3.500 0 -5 3.500 z" fill="#3a2a20"/></g>
<g transform="translate(656.8,79.6) scale(0.96)"><path d="M-9.500 21 q0.500 -7 6 -8.500 h7 q5.500 1.500 6 8.500 z" fill="#74b2ea"/><path d="M-1.300 12.500 h2.600 l0.800 6 l-2.100 2 l-2.100 -2 z" fill="#8a8a8a" opacity="0.7"/><ellipse cx="0" cy="7" rx="4.600" ry="5.600" fill="#f0b070"/><path d="M-5 6.500 q-0.500 -6.500 5 -6.500 q5.500 0 5 6.500 q-1.500 -3.500 -5 -3.500 q-3.500 0 -5 3.500 z" fill="#c8c8c8"/></g>
<g transform="translate(681.6,83.2) scale(0.64)"><path d="M-9.500 21 q0.500 -7 6 -8.500 h7 q5.500 1.500 6 8.500 z" fill="#74b2ea"/><path d="M-1.300 12.500 h2.600 l0.800 6 l-2.100 2 l-2.100 -2 z" fill="#8a8a8a" opacity="0.7"/><ellipse cx="0" cy="7" rx="4.600" ry="5.600" fill="#f0b47c"/><path d="M-5 6.500 q-0.500 -6.500 5 -6.500 q5.500 0 5 6.500 q-1.500 -3.500 -5 -3.500 q-3.500 0 -5 3.500 z" fill="#a86a3a"/></g>
<g transform="translate(693.9,82.6) scale(0.68)"><path d="M-6 14 q-1.500 -14 6 -14 q7.500 0 6 14 z" fill="#1a1a1a"/><path d="M-9 21 q0.500 -7 6 -8.500 h6 q5.500 1.500 6 8.500 z" fill="#f0a030"/><ellipse cx="0" cy="7.500" rx="3.800" ry="4.800" fill="#f4c090"/></g>
<g transform="translate(619.5,113.8) scale(0.66)"><path d="M-9.500 21 q0.500 -7 6 -8.500 h7 q5.500 1.500 6 8.500 z" fill="#74b2ea"/><path d="M-1.300 12.500 h2.600 l0.800 6 l-2.100 2 l-2.100 -2 z" fill="#8a8a8a" opacity="0.7"/><ellipse cx="0" cy="7" rx="4.600" ry="5.600" fill="#8a5a3a"/><path d="M-5 6.500 q-0.500 -6.500 5 -6.500 q5.500 0 5 6.500 q-1.500 -3.500 -5 -3.500 q-3.500 0 -5 3.500 z" fill="#3a2a20"/></g>
<g transform="translate(631.8,113.4) scale(0.7)"><path d="M-6 14 q-1.500 -14 6 -14 q7.500 0 6 14 z" fill="#f4c878"/><path d="M-9 21 q0.500 -7 6 -8.500 h6 q5.500 1.500 6 8.500 z" fill="#f8d090"/><ellipse cx="0" cy="7.500" rx="3.800" ry="4.800" fill="#f4c090"/></g>
<g transform="translate(650.5,113.8) scale(0.66)"><path d="M-9.500 21 q0.500 -7 6 -8.500 h7 q5.500 1.500 6 8.500 z" fill="#58a458"/><path d="M-1.300 12.500 h2.600 l0.800 6 l-2.100 2 l-2.100 -2 z" fill="#8a8a8a" opacity="0.7"/><ellipse cx="0" cy="7" rx="4.600" ry="5.600" fill="#8a5a3a"/><path d="M-5 6.500 q-0.500 -6.500 5 -6.500 q5.500 0 5 6.500 q-1.500 -3.500 -5 -3.500 q-3.500 0 -5 3.500 z" fill="#2a1a10"/></g>
<g transform="translate(662.8,113.8) scale(0.66)"><path d="M-9.500 21 q0.500 -7 6 -8.500 h7 q5.500 1.500 6 8.500 z" fill="#74b2ea"/><path d="M-1.300 12.500 h2.600 l0.800 6 l-2.100 2 l-2.100 -2 z" fill="#8a8a8a" opacity="0.7"/><ellipse cx="0" cy="7" rx="4.600" ry="5.600" fill="#f0b47c"/><path d="M-5 6.500 q-0.500 -6.500 5 -6.500 q5.500 0 5 6.500 q-1.500 -3.500 -5 -3.500 q-3.500 0 -5 3.500 z" fill="#b86a30"/></g>
<g transform="translate(682.7,110.6) scale(0.52)"><path d="M-9.500 21 q0.500 -7 6 -8.500 h7 q5.500 1.500 6 8.500 z" fill="#58a458"/><path d="M-1.300 12.500 h2.600 l0.800 6 l-2.100 2 l-2.100 -2 z" fill="#8a8a8a" opacity="0.7"/><ellipse cx="0" cy="7" rx="4.600" ry="5.600" fill="#f0b47c"/><path d="M-5 6.500 q-0.500 -6.500 5 -6.500 q5.500 0 5 6.500 q-1.500 -3.500 -5 -3.500 q-3.500 0 -5 3.500 z" fill="#2a2a2a"/></g>
<g transform="translate(692.7,110.6) scale(0.52)"><path d="M-9.500 21 q0.500 -7 6 -8.500 h7 q5.500 1.500 6 8.500 z" fill="#74b2ea"/><path d="M-1.300 12.500 h2.600 l0.800 6 l-2.100 2 l-2.100 -2 z" fill="#8a8a8a" opacity="0.7"/><ellipse cx="0" cy="7" rx="4.600" ry="5.600" fill="#f0b47c"/><path d="M-5 6.500 q-0.500 -6.500 5 -6.500 q5.500 0 5 6.500 q-1.500 -3.500 -5 -3.500 q-3.500 0 -5 3.500 z" fill="#c8c8c8"/></g>
<g transform="translate(682.7,120.2) scale(0.52)"><path d="M-9.500 21 q0.500 -7 6 -8.500 h7 q5.500 1.500 6 8.500 z" fill="#74b2ea"/><path d="M-1.300 12.500 h2.600 l0.800 6 l-2.100 2 l-2.100 -2 z" fill="#8a8a8a" opacity="0.7"/><ellipse cx="0" cy="7" rx="4.600" ry="5.600" fill="#8a5a3a"/><path d="M-5 6.500 q-0.500 -6.500 5 -6.500 q5.500 0 5 6.500 q-1.500 -3.500 -5 -3.500 q-3.500 0 -5 3.500 z" fill="#2a2a2a"/></g>
<g transform="translate(692.7,120.2) scale(0.52)"><path d="M-9.500 21 q0.500 -7 6 -8.500 h7 q5.500 1.500 6 8.500 z" fill="#58a458"/><path d="M-1.300 12.500 h2.600 l0.800 6 l-2.100 2 l-2.100 -2 z" fill="#8a8a8a" opacity="0.7"/><ellipse cx="0" cy="7" rx="4.600" ry="5.600" fill="#f0b47c"/><path d="M-5 6.500 q-0.500 -6.500 5 -6.500 q5.500 0 5 6.500 q-1.500 -3.500 -5 -3.500 q-3.500 0 -5 3.500 z" fill="#c86a30"/></g>
<rect x="610" y="137.2" width="108.500" height="13.4" fill="#d8d3b6"/>
<path d="M610 137.2 h108.500" stroke="#e6e2cc" stroke-width="0.8"/>
<text x="613.4" y="146.79999999999998" font-size="8.2" fill="#1c1c1c" font-weight="normal" text-anchor="start" textLength="69.6" lengthAdjust="spacingAndGlyphs" >Computer Network</text>
<path d="M707.0999999999999 143.6 l2.200 -2.400 l2.200 2.400 M707.0999999999999 147.2 l2.200 -2.400 l2.200 2.400" fill="none" stroke="#111" stroke-width="1.100"/>
<linearGradient id="gDbG" x1="0" y1="0" x2="1" y2="0"><stop offset="0" stop-color="#6a6a6a"/><stop offset="0.45" stop-color="#d4d4d4"/><stop offset="1" stop-color="#5e5e5e"/></linearGradient>
<linearGradient id="gDbB" x1="0" y1="0" x2="1" y2="0"><stop offset="0" stop-color="#3a80cc"/><stop offset="0.45" stop-color="#a4d2f8"/><stop offset="1" stop-color="#2f74c4"/></linearGradient>
<path d="M616.9 158.6 V173.60000000000002 q8.5 4 17 0 V158.6 z" fill="url(#gDbG)"/>
<ellipse cx="625.4" cy="158.6" rx="8.5" ry="2.200" fill="#c8c8c8"/>
<path d="M616.9 164.2 q8.5 4 17 0" fill="none" stroke="#4a4a4a" stroke-width="0.9"/>
<path d="M616.9 169.79999999999998 q8.5 4 17 0" fill="none" stroke="#4a4a4a" stroke-width="0.9"/>
<path d="M647.6 158.6 V173.60000000000002 q8.5 4 17 0 V158.6 z" fill="url(#gDbB)"/>
<ellipse cx="656.1" cy="158.6" rx="8.5" ry="2.200" fill="#b4dafa"/>
<path d="M647.6 164.2 q8.5 4 17 0" fill="none" stroke="#2a68b4" stroke-width="0.9"/>
<path d="M647.6 169.79999999999998 q8.5 4 17 0" fill="none" stroke="#2a68b4" stroke-width="0.9"/>
<circle cx="687.800" cy="165.800" r="9.500" fill="url(#gGlobe)"/><g fill="none" stroke="#a9d4f8" stroke-width="0.7" opacity="0.85"><ellipse cx="687.800" cy="165.800" rx="4" ry="9.200"/><path d="M678.500 165.800 H697 M680 160.400 H695.500 M680 171.200 H695.500"/></g>
<path d="M625.600 194 V196.600 M619 198.700 V196.600 H632 V198.700" fill="none" stroke="#4a7ab4" stroke-width="0.8"/>
<rect x="620.6" y="186.6" width="10.1" height="6.8" rx="0.7" fill="url(#gBlue)" stroke="#3a78bc" stroke-width="0.4"/>
<path d="M624.800 193.400 h1.600 v1 h-1.600 z" fill="#8a8a8a"/>
<rect x="614" y="198.7" width="10" height="6.9" rx="0.7" fill="url(#gBlue)" stroke="#3a78bc" stroke-width="0.4"/>
<path d="M618.2 205.6 v1.600 h1.600 v-1.600 z" fill="#8a8a8a"/><path d="M616.0 207.6 h6" stroke="#7a7a7a" stroke-width="0.9"/>
<rect x="627" y="198.7" width="10" height="6.9" rx="0.7" fill="url(#gBlue)" stroke="#3a78bc" stroke-width="0.4"/>
<path d="M631.2 205.6 v1.600 h1.600 v-1.600 z" fill="#8a8a8a"/><path d="M629.0 207.6 h6" stroke="#7a7a7a" stroke-width="0.9"/>
<rect x="647.7" y="188" width="18" height="12" rx="0.8" fill="#6e6e6e"/><rect x="648.7" y="189" width="16" height="10" fill="url(#gBlueL)"/>
<path d="M647.2 200 H666.2 L668.7 204.6 V205.6 H644.7 V204.6 Z" fill="#8e8e8e"/><path d="M644.7 204.6 H668.7 V205.6 H644.7 Z" fill="#5e5e5e"/>
<rect x="681.5" y="186.4" width="13.5" height="20.8" rx="1" fill="#6a6a6a"/><rect x="683.0" y="188.4" width="10.5" height="17.3" fill="#3e3e3e"/>
<path d="M688.25 188.4 V205.70000000000002" stroke="#7a7a7a" stroke-width="0.8"/>
<rect x="683.9" y="190.4" width="3.35" height="5" fill="#5c5c5c"/><rect x="689.25" y="190.4" width="3.35" height="5" fill="#5c5c5c"/>
<path d="M618.500 218.200 h14 l1.500 8 h-17 z" fill="#f4f4f4" stroke="#a8a8a8" stroke-width="0.5"/>
<rect x="614.300" y="225.200" width="23.400" height="12.400" rx="3" fill="#8a98a8"/><rect x="616.800" y="225.200" width="18.400" height="12.400" fill="url(#gBlueL)"/>
<rect x="617.500" y="225.200" width="17" height="1.800" fill="#4a5a6a"/>
<path d="M646.500 221 H667 L662.500 227 H651 Z" fill="#6a6a6a"/><path d="M649 221.800 H664.500 L661.500 226 H652 Z" fill="url(#gBlueL)"/>
<rect x="644.700" y="227.500" width="24" height="6.500" rx="1" fill="#a8a8a8"/><rect x="644.700" y="232" width="24" height="2.600" rx="1" fill="#7a7a7a"/>
<path d="M681.500 218.500 q6.800 -2.600 13.500 0 V236.500 q-6.800 2.400 -13.500 0 Z" fill="url(#gGrayH)"/><path d="M681.500 218.500 q6.800 -2.600 13.500 0 q-6.800 2.200 -13.500 0 Z" fill="#a0a0a0"/>
<rect x="619.200" y="249" width="12" height="19" rx="1.600" fill="#7a7a7a"/><rect x="620.400" y="251.400" width="9.600" height="13" fill="url(#gBlueL)"/><rect x="623.400" y="265.600" width="3.600" height="1.400" fill="#bdbdbd"/>
<rect x="648.600" y="248.300" width="16.300" height="20.700" rx="1" fill="#3f88d6"/><rect x="649.600" y="249.300" width="14.300" height="18.700" fill="#5a9fe0"/><circle cx="656.800" cy="261.400" r="5" fill="#8a8a8a" stroke="#3e3e3e" stroke-width="1"/><circle cx="656.800" cy="261.400" r="2" fill="#4a4a4a"/><circle cx="656.800" cy="252.600" r="1.800" fill="#4a4a4a"/>
<path d="M675.700 258.400 L680 255.700 H695.700 L700 258.400 Z" fill="#9a9aa0"/><rect x="675.700" y="258.200" width="24.300" height="4.300" rx="0.8" fill="#98aec6"/>
<rect x="678.2" y="259.400" width="2.200" height="2.200" fill="#2c5a8e"/>
<rect x="682.4000000000001" y="259.400" width="2.200" height="2.200" fill="#2c5a8e"/>
<rect x="686.6" y="259.400" width="2.200" height="2.200" fill="#2c5a8e"/>
<rect x="690.8000000000001" y="259.400" width="2.200" height="2.200" fill="#2c5a8e"/>
<rect x="695.0" y="259.400" width="2.200" height="2.200" fill="#2c5a8e"/>
<rect x="614.200" y="282.400" width="23.300" height="11.600" rx="1" fill="url(#gBlue)" stroke="#3a78bc" stroke-width="0.5"/><rect x="615.200" y="283.400" width="21.300" height="4.600" fill="#9ccbf4" opacity="0.5"/><path d="M624.500 294 h2 v1.800 h-2 z" fill="#5a5a5a"/><path d="M620 296.600 h11" stroke="#3e3e3e" stroke-width="1.200"/>
<g fill="none"><path d="M646.800 294 A10.400 10.400 0 1 1 666 294" stroke="#8ecbf4" stroke-width="1.500"/><path d="M649.800 293.500 A7.200 7.200 0 1 1 663 293.500" stroke="#a6d6f6" stroke-width="1.300"/><path d="M652.600 292.500 A4 4 0 1 1 660.200 292.500" stroke="#bfe2f9" stroke-width="1.100"/></g>
<path d="M651.500 285 V295 M661.300 285 V295" stroke="#8c8c8c" stroke-width="0.9"/><path d="M645.700 299 L648.500 294.500 H664.200 L667 299 V300.400 H645.700 Z" fill="#8e8e8e"/><path d="M650 294.700 H662.700 L664 300.400 H648.700 Z" fill="url(#gBlue)"/>
<rect x="679.400" y="280" width="19.600" height="12" rx="0.8" fill="url(#gBlue)" stroke="#3a78bc" stroke-width="0.5"/><path d="M688.200 292 h2 v2 h-2 z" fill="#6a6a6a"/><path d="M684.500 294.500 h9.500" stroke="#5a5a5a" stroke-width="1"/><path d="M678.500 296.300 h15.500 l1.200 2.500 h-18 z" fill="#5a5a5a"/><ellipse cx="697.600" cy="298" rx="1.200" ry="0.9" fill="#4a4a4a"/>
<rect x="610" y="305.6" width="108.500" height="13.2" fill="#d8d3b6"/>
<path d="M610 305.6 h108.500" stroke="#e6e2cc" stroke-width="0.8"/>
<text x="613.4" y="315.20000000000005" font-size="8.2" fill="#1c1c1c" font-weight="normal" text-anchor="start" textLength="16.3" lengthAdjust="spacingAndGlyphs" >UML</text>
<path d="M707.0999999999999 309.20000000000005 l2.200 2.400 l2.200 -2.400 M707.0999999999999 312.8 l2.200 2.400 l2.200 -2.400" fill="none" stroke="#111" stroke-width="1.100"/>
<rect x="610" y="319.3" width="108.500" height="13.2" fill="#d8d3b6"/>
<path d="M610 319.3 h108.500" stroke="#e6e2cc" stroke-width="0.8"/>
<text x="613.4" y="328.90000000000003" font-size="8.2" fill="#1c1c1c" font-weight="normal" text-anchor="start" textLength="36" lengthAdjust="spacingAndGlyphs" >Flowchart</text>
<path d="M707.0999999999999 322.90000000000003 l2.200 2.400 l2.200 -2.400 M707.0999999999999 326.5 l2.200 2.400 l2.200 -2.400" fill="none" stroke="#111" stroke-width="1.100"/>
<rect x="610" y="333" width="108.500" height="13.2" fill="#d8d3b6"/>
<path d="M610 333 h108.500" stroke="#e6e2cc" stroke-width="0.8"/>
<text x="613.4" y="342.6" font-size="8.2" fill="#1c1c1c" font-weight="normal" text-anchor="start" textLength="21.5" lengthAdjust="spacingAndGlyphs" >BPMN</text>
<path d="M707.0999999999999 336.6 l2.200 2.400 l2.200 -2.400 M707.0999999999999 340.2 l2.200 2.400 l2.200 -2.400" fill="none" stroke="#111" stroke-width="1.100"/>
<rect x="610" y="346.7" width="108.500" height="13.2" fill="#d8d3b6"/>
<path d="M610 346.7 h108.500" stroke="#e6e2cc" stroke-width="0.8"/>
<text x="613.4" y="356.3" font-size="8.2" fill="#1c1c1c" font-weight="normal" text-anchor="start" textLength="69.5" lengthAdjust="spacingAndGlyphs" >Entity Relationship</text>
<path d="M707.0999999999999 350.3 l2.200 2.400 l2.200 -2.400 M707.0999999999999 353.9 l2.200 2.400 l2.200 -2.400" fill="none" stroke="#111" stroke-width="1.100"/>
<clipPath id="cpCE"><rect x="610" y="360.400" width="108.500" height="8"/></clipPath>
<g clip-path="url(#cpCE)">
<rect x="610" y="360.4" width="108.500" height="13.2" fill="#d8d3b6"/>
<path d="M610 360.4 h108.500" stroke="#e6e2cc" stroke-width="0.8"/>
<text x="613.4" y="370.0" font-size="8.2" fill="#1c1c1c" font-weight="normal" text-anchor="start" textLength="63" lengthAdjust="spacingAndGlyphs" >Current Elements</text>
<path d="M707.0999999999999 364.0 l2.200 2.400 l2.200 -2.400 M707.0999999999999 367.59999999999997 l2.200 2.400 l2.200 -2.400" fill="none" stroke="#111" stroke-width="1.100"/>
</g>
<rect x="609.5" y="374.8" width="118.5" height="10" rx="1.5" fill="url(#gHead)" stroke="#b3af9c" stroke-width="0.8"/>
<text x="625.0" y="382.8" font-size="8.2" fill="#222" font-weight="normal" text-anchor="start" textLength="57.7" lengthAdjust="spacingAndGlyphs" >Properties View</text>
<path d="M691.5 378.0 h4.5 v3.5 M690.0 379.6 h4.2 v3.2 h-4.2 z" fill="none" stroke="#333" stroke-width="0.8"/>
<path d="M705.2 377.40000000000003 h2.600 v2.800 h-2.600 z M704.4 380.3 h4.200 M706.5 380.3 v2.800" fill="none" stroke="#3c3c3c" stroke-width="0.700"/>
<path d="M715.2 378.0 l3.6 3.8 M718.8 378.0 l-3.6 3.8" stroke="#333" stroke-width="0.8"/>
<g transform="translate(613.700,375.800)"><rect x="0" y="0" width="6.800" height="8.200" rx="0.8" fill="#eef2fa" stroke="#4a5a9a" stroke-width="0.7"/><path d="M2 2 h2.800 M2 4.100 h2.800 M2 6.200 h2.800" stroke="#6a4ab0" stroke-width="0.8"/></g>
<rect x="609.800" y="385.500" width="118.200" height="174.500" fill="#ece9d8" stroke="#a8a494" stroke-width="0.8"/>
<path d="M609.800 385.800 H728" stroke="#8e8c84" stroke-width="1"/>
<rect x="611.6" y="388.2" width="4.600" height="4.600" fill="#fff" stroke="#7a7a7a" stroke-width="0.6"/><path d="M612.6 390.5 h2.600" stroke="#222" stroke-width="0.7"/>
<text x="620" y="393" font-size="8.6" fill="#111" font-weight="bold" text-anchor="start" textLength="32.8" lengthAdjust="spacingAndGlyphs" >General</text>
<rect x="619" y="395.600" width="108.600" height="8.900" fill="#fff"/>
<text x="620" y="402.8" font-size="8.2" fill="#222" font-weight="normal" text-anchor="start" textLength="47.7" lengthAdjust="spacingAndGlyphs" >Number of ...</text>
<text x="674.3" y="402.8" font-size="8.2" fill="#222" font-weight="normal" text-anchor="start" >9</text>
<rect x="619" y="405" width="108.600" height="8.900" fill="#fff"/>
<text x="620" y="412.2" font-size="8.2" fill="#222" font-weight="normal" text-anchor="start" textLength="47.7" lengthAdjust="spacingAndGlyphs" >Number of ...</text>
<text x="674.3" y="412.2" font-size="8.2" fill="#222" font-weight="normal" text-anchor="start" >7</text>
<rect x="611.6" y="416.8" width="4.600" height="4.600" fill="#fff" stroke="#7a7a7a" stroke-width="0.6"/><path d="M612.6 419.1 h2.600" stroke="#222" stroke-width="0.7"/>
<text x="620" y="421.6" font-size="8.6" fill="#111" font-weight="bold" text-anchor="start" textLength="19.5" lengthAdjust="spacingAndGlyphs" >Data</text>
<rect x="619" y="424" width="108.600" height="8.900" fill="#fff"/>
<text x="620" y="431.4" font-size="8.2" fill="#222" font-weight="normal" text-anchor="start" textLength="42.5" lengthAdjust="spacingAndGlyphs" >Description</text>
<path d="M672.300 395.600 V413.900 M672.300 424 V432.900" stroke="#ece9d8" stroke-width="0.7"/>
</svg></body></html>
